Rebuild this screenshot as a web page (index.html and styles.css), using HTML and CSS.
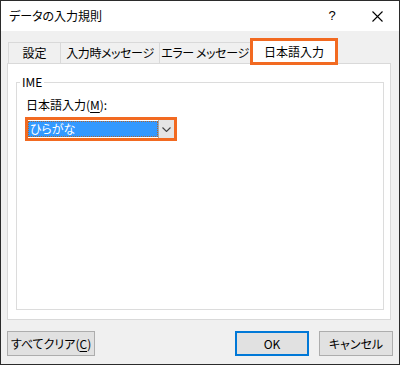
FILE: index.html
```html
<!DOCTYPE html>
<html lang="ja">
<head>
<meta charset="utf-8">
<title>データの入力規則</title>
<link rel="stylesheet" href="styles.css">
</head>
<body>
<div class="window">
  <div class="titlebar">
    <div class="title">データの入力規則</div>
    <div class="help">?</div>
    <div class="close">
      <svg width="11" height="11" viewBox="0 0 11 11"><path d="M0.5 0.5 L10.5 10.5 M10.5 0.5 L0.5 10.5" stroke="#000" stroke-width="1.1" fill="none"/></svg>
    </div>
  </div>
  <div class="body">
    <div class="tabs">
      <div class="tab tab-settings">設定</div>
      <div class="tab tab-input">入力時メッセージ</div>
      <div class="tab tab-error">エラー メッセージ</div>
      <div class="tab tab-active">日本語入力</div>
    </div>
    <div class="panel">
      <fieldset class="group">
        <legend class="group-title">IME</legend>
        <div class="group-body">
          <div class="field-label">日本語入力(<span class="ul">M</span>):</div>
          <div class="combo">
            <div class="combo-value"><span class="combo-text">ひらがな</span></div>
            <div class="combo-button">
              <svg width="9" height="5" viewBox="0 0 9 5"><path d="M0.5 0.5 L4.5 4.5 L8.5 0.5" stroke="#444" stroke-width="1.1" fill="none"/></svg>
            </div>
          </div>
        </div>
      </fieldset>
    </div>
  </div>
  <div class="footer">
    <button class="btn btn-clear">すべてクリア(<span class="ul">C</span>)</button>
    <button class="btn btn-ok">OK</button>
    <button class="btn btn-cancel">キャンセル</button>
  </div>
</div>
</body>
</html>
```
FILE: styles.css
```css
* { box-sizing: border-box; }
html, body { margin: 0; padding: 0; }
body {
  font-family: "Noto Sans CJK JP", "Noto Sans", sans-serif;
  font-feature-settings: "palt";
  font-size: 12px;
  color: #000;
  background: #fff;
}
.window {
  width: 400px;
  height: 365px;
  border: 1px solid #2b2b2b;
  background: #f0f0f0;
  display: flex;
  flex-direction: column;
}
.titlebar {
  height: 30px;
  background: #fff;
  display: flex;
  align-items: center;
  padding-left: 8px;
  flex: none;
}
.title { flex: 1; line-height: 16px; }
.help {
  width: 46px;
  text-align: center;
  font-family: "Liberation Sans", sans-serif;
  font-size: 13px;
  line-height: 16px;
}
.close {
  width: 44px;
  height: 30px;
  display: flex;
  align-items: center;
  justify-content: center;
}
.body {
  padding: 11px 8px 0 6px;
  flex: none;
}
.tabs {
  display: flex;
  align-items: flex-end;
  height: 21px;
  padding-left: 1px;
  position: relative;
  z-index: 1;
}
.tab {
  height: 21px;
  border: 1px solid #d9d9d9;
  border-bottom: 0;
  margin-left: -1px;
  display: flex;
  align-items: center;
  justify-content: center;
  line-height: 16px;
  background: #f0f0f0;
  white-space: nowrap;
}
.tab-settings { width: 53px; margin-left: 0; }
.tab-input { width: 100px; letter-spacing: -0.4px; }
.tab-error { width: 92px; letter-spacing: -0.4px; }
.tab-active {
  width: 88px;
  height: 27px;
  margin-bottom: -2px;
  background: #fff;
  border: 3px solid #f26a21;
  position: relative;
  z-index: 2;
  padding-top: 1px;
}
.panel {
  width: 384px;
  height: 257px;
  background: #fff;
  border: 1px solid #d9d9d9;
  padding: 10px 7px 0 8px;
}
.group {
  margin: 0;
  padding: 0;
  width: 368px;
  height: 236px;
  border: 1px solid #dcdcdc;
  min-width: 0;
}
.group-title {
  margin-left: 3px;
  padding: 0 2px;
  line-height: 16px;
}
.group-body {
  padding: 7px 8px 0 8px;
}
.field-label {
  line-height: 16px;
  padding-left: 1px;
}
.ul { text-decoration: underline; text-underline-offset: 2px; }
.combo {
  margin-top: 4px;
  width: 152px;
  height: 24px;
  border: 3px solid #f26a21;
  display: flex;
  background: #fff;
}
.combo-value {
  flex: 1;
  padding: 1px 0 1px 0;
}
.combo-text {
  display: block;
  height: 16px;
  background: #3399ff;
  color: #fff;
  line-height: 14px;
  padding-left: 1px;
  border: 1px dotted #b2642e;
}
.combo-button {
  width: 16px;
  background: #e5e5e5;
  border-left: 1px solid #a6a6a6;
  display: flex;
  align-items: center;
  justify-content: center;
}
.footer {
  display: flex;
  padding: 11px 6px 0 6px;
}
.btn {
  height: 25px;
  background: #e1e1e1;
  border: 1px solid #adadad;
  font: inherit;
  font-size: 12px;
  color: #000;
  padding: 0;
  margin: 0;
  line-height: 16px;
}
.btn-clear { width: 88px; margin-right: auto; }
.btn-ok { width: 74px; border: 2px solid #0078d7; }
.btn-cancel { width: 74px; margin-left: 10px; }
```
